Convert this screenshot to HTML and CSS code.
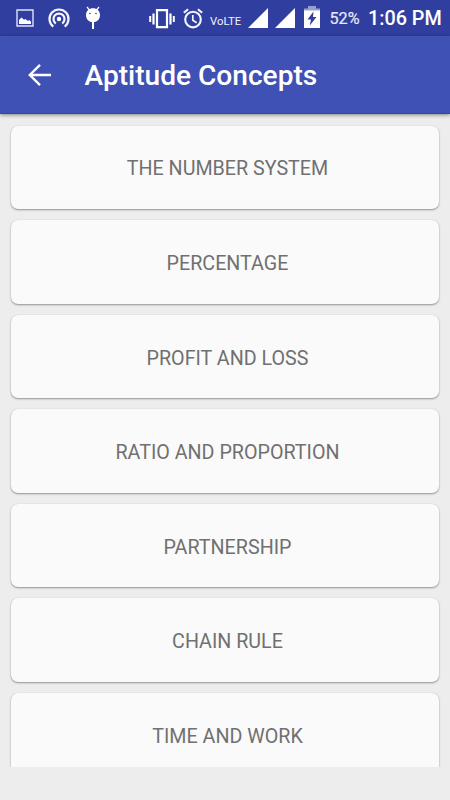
FILE: index.html
```html
<!DOCTYPE html>
<html lang="en">
<head>
<meta charset="utf-8">
<title>Aptitude Concepts</title>
<link rel="stylesheet" href="styles.css">
</head>
<body>
<div class="status">
  <svg class="picture" width="18" height="18" viewBox="0 0 18 18"><path d="M1 1h16v16H1z" fill="none" stroke="#dfe2f5" stroke-width="1.400"/><path d="M3 15v-4L5.500 8.500l2.500 2.300 1.500-.7 2 1.700 2-.6 1.500 1.300V15z" fill="#fff"/></svg>
  <svg class="hotspot" width="22" height="20" viewBox="0 0 22 20"><g fill="none" stroke="#f3f4fd" stroke-width="2.200"><path d="M5.300 18.600a9.500 9.500 0 1 1 11.400 0"/><path d="M7.800 15.500a5.500 5.500 0 1 1 6.400 0"/></g><circle cx="11" cy="11" r="2.200" fill="#fff"/></svg>
  <svg class="droid" width="16" height="24" viewBox="0 0 16 24"><path d="M2 1l2.500 3M14 1l-2.500 3" stroke="#fff" stroke-width="1.200"/><path d="M8 2.300c3.800 0 7 2.500 7 6.700 0 4.400-3 7.200-7 7.200S1 13.400 1 9c0-4.200 3.200-6.700 7-6.700z" fill="#fff"/><path d="M7 15h2v8H7z" fill="#fff"/><circle cx="5" cy="7.500" r=".8" fill="#303f9f"/><circle cx="11" cy="7.500" r=".8" fill="#303f9f"/></svg>
  <svg class="vibrate" width="26" height="20" viewBox="0 0 26 20"><path d="M8 1.200h10v17H8z" fill="none" stroke="#fff" stroke-width="2.200"/><path d="M4.500 4.500v11M21.500 4.500v11" stroke="#fff" stroke-width="2.200"/><path d="M1.200 7v6M24.800 7v6" stroke="#fff" stroke-width="2"/></svg>
  <svg class="alarm" width="20" height="21" viewBox="0 0 20 21"><g fill="none" stroke="#f3f4fd" stroke-width="2.100"><circle cx="10" cy="11.600" r="7.800"/><path d="M.8 4.800l4.300-3.600M19.200 4.800l-4.300-3.600"/><path d="M9.800 7v5.200l3.900 2.600" stroke-width="1.700"/></g></svg>
  <span class="volte">VoLTE</span>
  <svg class="signal" width="21" height="20" viewBox="0 0 21 20"><path d="M20 0v20H0z" fill="#fff"/></svg>
  <svg class="signal2" width="21" height="20" viewBox="0 0 21 20"><path d="M20 0v20H0z" fill="#fff"/></svg>
  <svg class="battery" width="16" height="23" viewBox="0 0 16 23"><path d="M4 1h8v2.500h4V6H0V3.500h4z" fill="#98a0d0"/><path d="M0 5.500h16V23H0z" fill="#fff"/><path d="M9.500 6.500L3.500 14.500H7L5.800 20.500l6.700-8.500H9z" fill="#303f9f"/></svg>
  <span class="percent">52%</span>
  <span class="time">1:06 PM</span>
</div>
<header class="bar">
  <svg class="back" width="24" height="24" viewBox="0 0 24 24"><path d="M23 12H2M12 1.800L1.800 12 12 22.200" fill="none" stroke="#fff" stroke-width="2.400"/></svg>
  <h1>Aptitude Concepts</h1>
</header>
<main class="list">
  <div class="card">THE NUMBER SYSTEM</div>
  <div class="card">PERCENTAGE</div>
  <div class="card">PROFIT AND LOSS</div>
  <div class="card">RATIO AND PROPORTION</div>
  <div class="card">PARTNERSHIP</div>
  <div class="card">CHAIN RULE</div>
  <div class="card">TIME AND WORK</div>
</main>
</body>
</html>
```
FILE: styles.css
```css
* { box-sizing: border-box; }
body {
  margin: 0;
  width: 450px;
  height: 800px;
  overflow: hidden;
  background: #ededed;
  font-family: Roboto, "Liberation Sans", sans-serif;
}
svg { display: block; flex: none; }
.status {
  height: 36px;
  display: flex;
  align-items: flex-start;
  background: #303f9f;
  color: #fff;
  white-space: nowrap;
}
.picture { margin: 9px 0 0 16px; }
.hotspot { margin: 8px 0 0 14px; }
.droid { margin: 6px 0 0 15px; }
.vibrate { margin: 9px 0 0 48px; }
.alarm { margin: 8px 0 0 8px; }
.volte {
  width: 32px;
  margin: 15px 0 0 7px;
  font-size: 11.300px;
  line-height: 14px;
  color: #f0f1fb;
}
.signal { margin: 8px 0 0 6px; }
.signal2 { margin: 8px 0 0 6px; }
.battery { margin: 5px 0 0 8px; }
.percent {
  width: 31px;
  margin: 9px 0 0 9.500px;
  font-size: 16.200px;
  line-height: 20px;
  color: #e8eaf8;
  -webkit-text-stroke: .2px #e8eaf8;
}
.time {
  margin: 7px 0 0 7.500px;
  font-size: 19.800px;
  line-height: 24px;
  font-weight: 500;
}
.bar {
  height: 78px;
  display: flex;
  align-items: center;
  padding-left: 28px;
  background: #3f51b5;
  border-bottom: 1px solid #3444ad;
  box-shadow: 0 1px 4px rgba(0, 0, 0, .45);
  position: relative;
}
.bar h1 {
  margin: 2px 0 0 32.500px;
  font-size: 28.100px;
  line-height: 36px;
  font-weight: 500;
  color: #fff;
}
.list {
  height: 652.500px;
  overflow: hidden;
  padding: 11.600px 11px 0;
  display: flex;
  flex-direction: column;
  gap: 11.200px;
}
.card {
  flex: none;
  height: 83.400px;
  display: flex;
  align-items: center;
  justify-content: center;
  padding: 4.400px 0 0 5px;
  border-radius: 7px;
  background: #fafafa;
  box-shadow: 0 1px 2px rgba(0, 0, 0, .38), 0 0 1px rgba(0, 0, 0, .15);
  color: #707070;
  font-size: 19.700px;
  line-height: 24px;
}
```
